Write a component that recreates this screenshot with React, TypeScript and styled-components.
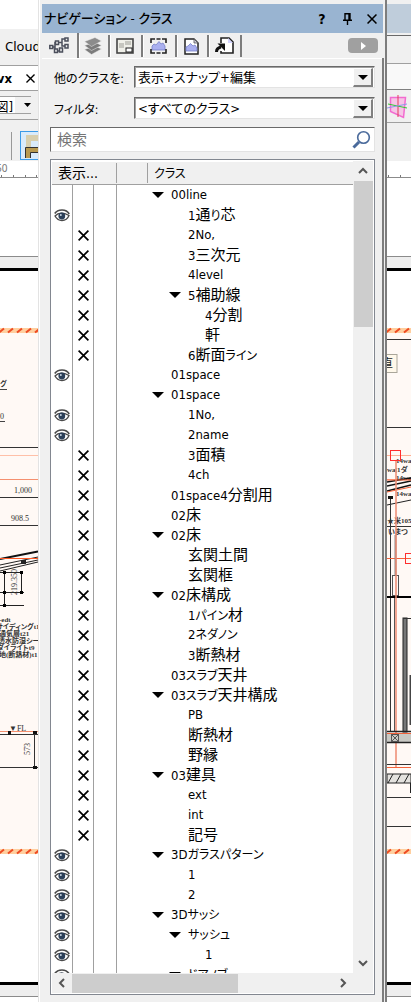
import React from 'react';
import styled, { createGlobalStyle, css } from 'styled-components';

const sans = `'DejaVu Sans Condensed', 'Noto Sans', 'Noto Sans CJK JP', sans-serif`;

const GlobalStyle = createGlobalStyle`
  *, *::before, *::after { box-sizing: border-box; }
  html, body, #root { height: 100%; }
  body {
    margin: 0;
    overflow: hidden;
    background: #fff;
    color: #000;
    font-family: ${sans};
    font-size: 13px;
  }
  button, input, select { font: inherit; color: inherit; margin: 0; padding: 0; border: 0; border-radius: 0; background: none; }
`;

const Page = styled.div`
  display: flex;
  height: 100%;
`;

/* ---------- application window behind the palette ---------- */

const Side = styled.div<{ $width: number }>`
  flex: none;
  width: ${p => p.$width}px;
  display: flex;
  flex-direction: column;
  overflow: hidden;
  background: #fff;
  svg { flex: none; display: block; }
`;

const Band = styled.div<{ $height: number; $bg?: string; $line?: string }>`
  flex: none;
  height: ${p => p.$height}px;
  display: flex;
  align-items: center;
  white-space: nowrap;
  background: ${p => p.$bg ?? '#f0f0f0'};
  border-bottom: ${p => (p.$line ? `1px solid ${p.$line}` : '0')};
`;

const MenuName = styled.span`
  padding: 0 0 3px 5px;
  font-family: 'Noto Sans', sans-serif;
  font-size: 13px;
`;

const FileTab = styled.span`
  display: flex;
  align-items: center;
  gap: 14px;
  width: 35px;
  justify-content: flex-end;
  font-weight: 700;
`;

const LayerField = styled.span`
  display: flex;
  align-items: center;
  justify-content: space-between;
  width: 31px;
  height: 18px;
  background: linear-gradient(90deg, #fff 15px, #f0f0f0 15px);
  border: solid #a0a0a0;
  border-width: 1px 0;
`;

const LayerName = styled.span`
  width: 13px;
  display: flex;
  justify-content: flex-end;
  overflow: hidden;
  font-size: 13px;
`;

/* ---------- palette ---------- */

const Palette = styled.section`
  flex: 1;
  min-width: 0;
  display: flex;
  flex-direction: column;
  padding: 4px 0 0 4px;
  background: #f0f0f0;
  border-right: 2px solid #7d7d7d;
  box-shadow: inset 1px 0 #e3e3e3, inset 2px 0 #fff;
`;

const TitleBar = styled.header`
  flex: none;
  display: flex;
  align-items: center;
  height: 29px;
  margin-right: 2px;
  padding: 0 4px 0 2px;
  background: #99b4d1;
`;

const Title = styled.h1`
  flex: 1;
  margin: 0;
  font-size: 13px;
  font-weight: 500;
  line-height: 20px;
  white-space: nowrap;
  font-feature-settings: 'palt';
`;

const TitleButton = styled.button`
  width: 14px;
  height: 20px;
  margin-left: 11px;
  display: grid;
  place-items: center;
  font-size: 14px;
  font-weight: 700;
`;

const TabBar = styled.div`
  flex: none;
  display: flex;
  height: 25px;
  align-items: flex-end;
  padding-right: 7px;
`;

const Tab = styled.button<{ $width: number; $active?: boolean }>`
  width: ${p => p.$width}px;
  height: ${p => (p.$active ? 25 : 22)}px;
  display: grid;
  place-items: center;
  padding-right: 2px;
  border-right: 2px solid #7d7d7d;
  border-left: ${p => (p.$active ? 0 : 1)}px solid #fff;
  margin-bottom: ${p => (p.$active ? 0 : 1)}px;
`;

const PlayButton = styled.button`
  width: 30px;
  height: 15px;
  margin: 0 0 5px auto;
  display: grid;
  place-items: center;
  border-radius: 4px;
  background: #a0a0a0;
`;

const TabPage = styled.div`
  flex: 1;
  min-height: 0;
  display: flex;
  flex-direction: column;
  margin-right: 1px;
  padding: 7px 7px 7px 8px;
  border-right: 2px solid #7d7d7d;
  box-shadow: inset 0 1px #fff;
`;

const Field = styled.div`
  flex: none;
  display: flex;
  align-items: center;
  height: 24px;
  margin: 0 0 7px 4px;
`;

const FieldLabel = styled.label`
  flex: none;
  width: 80px;
  font-size: 12px;
  white-space: nowrap;
  font-feature-settings: 'palt';
`;

const sunken = css`
  border: 1px solid #e3e3e3;
  border-top-color: #696969;
  border-left-color: #696969;
  background: #fff;
`;

const SelectBox = styled.span`
  ${sunken}
  position: relative;
  flex: 1;
  min-width: 0;
  height: 22px;
  box-shadow: inset 1px 1px #a0a0a0;
`;

const Select = styled.select`
  appearance: none;
  width: 100%;
  height: 20px;
  padding: 0 22px 0 3px;
  font-size: 13px;
  outline: 0;
  font-feature-settings: 'palt';
`;

const SelectArrow = styled.span`
  position: absolute;
  top: 1px;
  right: 1px;
  bottom: 0;
  width: 20px;
  display: grid;
  place-items: center;
  pointer-events: none;
  background: #f0f0f0;
  border: 1px solid #fff;
  border-right: 2px solid #808080;
  border-bottom: 2px solid #808080;
`;

const Search = styled.label`
  ${sunken}
  flex: none;
  display: flex;
  align-items: center;
  height: 25px;
  padding: 0 3px 0 6px;
  margin-bottom: 7px;
`;

const SearchInput = styled.input`
  flex: 1;
  min-width: 0;
  height: 22px;
  font-size: 15px;
  outline: 0;
  &::placeholder { color: #757575; opacity: 1; }
`;

const ListFrame = styled.div`
  flex: 1;
  min-height: 0;
  display: grid;
  grid-template-columns: minmax(0, 1fr) 20px;
  grid-template-rows: minmax(0, 1fr) 20px;
  padding: 1px;
  border: 1px solid #828790;
  background: #fff;
`;

const Viewport = styled.div`
  overflow: hidden;
  padding-top: 1px;
`;

const ClassTable = styled.table`
  width: 100%;
  table-layout: fixed;
  border-collapse: separate;
  border-spacing: 0;
`;

const HeadCell = styled.th<{ $line?: boolean }>`
  height: 23px;
  padding: 0 6px;
  text-align: left;
  font-weight: 400;
  font-size: 14px;
  line-height: 18px;
  white-space: nowrap;
  background: #f0f0f0;
  border-bottom: 1px solid #a0a0a0;
  font-feature-settings: 'palt';
  ${p => p.$line && css`background: linear-gradient(#a0a0a0, #a0a0a0) right center / 1px 20px no-repeat #f0f0f0;`}
`;

const MarkCell = styled.td`
  height: 20px;
  padding: 0;
  border-right: 1px solid #a0a0a0;
  line-height: 0;
  text-align: center;
`;

const NameCell = styled.td<{ $level: number }>`
  height: 20px;
  padding: 0 0 0 ${p => 35 + p.$level * 17}px;
`;

const NameRow = styled.span`
  display: flex;
  align-items: center;
  height: 20px;
  line-height: 20px;
  white-space: nowrap;
  font-feature-settings: 'palt';
`;

const Twisty = styled.span`
  flex: none;
  width: 19px;
  line-height: 0;
`;

const Kanji = styled.span`
  font-family: 'Noto Sans CJK JP', sans-serif;
  font-size: 15px;
  line-height: 18px;
`;

const Kana = styled.span`
  font-family: 'Noto Sans CJK JP', sans-serif;
  font-size: 12px;
  line-height: 18px;
`;

const VBar = styled.div`
  display: flex;
  flex-direction: column;
  align-items: center;
  background: #f0f0f0;
`;

const HBar = styled.div`
  display: flex;
  align-items: center;
  background: #f0f0f0;
`;

const BarButton = styled.button`
  flex: none;
  width: 20px;
  height: 20px;
  display: grid;
  place-items: center;
`;

const VThumb = styled.div`
  width: 19px;
  height: 18%;
  background: #cdcdcd;
  margin-bottom: auto;
`;

const HThumb = styled.div`
  width: 55%;
  height: 19px;
  background: #cdcdcd;
  margin-right: auto;
`;

/* ---------- small icons ---------- */

const Down = () => (
  <svg width="12" height="6" viewBox="0 0 12 6"><path d="M0 0H12L6 6Z" fill="#000" /></svg>
);

const SmallDown = () => (
  <svg width="10" height="5" viewBox="0 0 10 5"><path d="M0 0H10L5 5Z" fill="#000" /></svg>
);

const Cross = ({ size = 11 }: { size?: number }) => (
  <svg width={size} height={size} viewBox="0 0 11 11">
    <path d="M.6 .6L10.4 10.4M10.4 .6L.6 10.4" stroke="#000" strokeWidth="1.7" fill="none" />
  </svg>
);

const Eye = () => (
  <svg width="16" height="13" viewBox="0 0 16 13">
    <path d="M1 7Q6 1.500 15 6.500Q13 11.500 8 11.500Q3.500 11.500 1 7Z" fill="#fff" stroke="#4a4a4a" strokeWidth="1.300" />
    <path d="M.8 4.500Q3 1 8 1T15.200 5" fill="none" stroke="#4a4a4a" strokeWidth="1.700" />
    <circle cx="7.800" cy="7" r="3.400" fill="#2b3f58" />
    <circle cx="6.800" cy="6" r="1" fill="#c8d4e0" />
  </svg>
);

const Chevron = ({ turn }: { turn: number }) => (
  <svg width="10" height="10" viewBox="0 0 10 10">
    <path d="M1 7L5 3L9 7" transform={`rotate(${turn} 5 5)`} fill="none" stroke="#555" strokeWidth="2" />
  </svg>
);

const Pin = () => (
  <svg width="9" height="12" viewBox="0 0 9 12">
    <path d="M2 7V.700H7V7M0 7.300H9M4.500 7V12M6 1V7" fill="none" stroke="#000" strokeWidth="1.400" />
  </svg>
);

const ClassesIcon = () => (
  <svg width="20" height="17" viewBox="0 0 20 17" fill="#f0f0f0" stroke="#4b4f5c" strokeWidth="1.500">
    <path d="M3 10H6V5.500H8M6 10V14M10 5.500H13V2H17M13 5.500V9H17M9 14H12" fill="none" />
    <rect x=".8" y="8.500" width="3" height="3" />
    <rect x="6.500" y="4" width="3" height="3.500" />
    <rect x="5.500" y="12" width="3" height="3.500" />
    <rect x="10.500" y="11" width="3" height="4" />
    <rect x="16" y="1" width="3" height="3" />
    <rect x="16" y="7.500" width="3" height="3.500" />
  </svg>
);

const LayersIcon = () => (
  <svg width="18" height="18" viewBox="0 0 18 18" fill="#7c7c7c" stroke="#f0f0f0" strokeWidth=".5">
    <path d="M.5 12.500L11 9L17.500 12L7.500 17.500Z" />
    <path d="M.5 8.500L11 5L17.500 8.500L7.500 13.500Z" />
    <path d="M.5 4.500L11 .5L17.500 4L7.500 9.500Z" fill="#8c8c8c" />
  </svg>
);

const SheetIcon = () => (
  <svg width="18" height="16" viewBox="0 0 18 16">
    <rect x="1" y="1" width="16" height="14" fill="#efefe8" stroke="#454545" strokeWidth="1.600" />
    <path d="M3 5H8V10H3ZM9 3H15V7H9Z" fill="#c5c5be" />
    <rect x="10" y="10" width="6" height="4" fill="#fff" stroke="#222" />
  </svg>
);

const ViewportIcon = () => (
  <svg width="17" height="16" viewBox="0 0 17 16">
    <path d="M2 12V8L4 6L6 7L9 3.500L11 6L13 5L15 8V12Z" fill="#aab0f0" stroke="#7780c8" strokeWidth=".8" />
    <path d="M1 5V1H5M12 1H16V5M16 11V15H12M5 15H1V11M6.500 1H10.500M6.500 15H10.500" fill="none" stroke="#222" strokeWidth="1.600" />
  </svg>
);

const SavedViewIcon = () => (
  <svg width="15" height="17" viewBox="0 0 15 17">
    <path d="M1 1H10L14 5V16H1Z" fill="#fff" stroke="#222" strokeWidth="1.500" />
    <path d="M10 1V5H14Z" fill="#ccd" stroke="#555" strokeWidth=".8" />
    <path d="M2 13V9L4 8L6.500 5.500L9 8L11 7L13 10V13Z" fill="#aab0f0" stroke="#7780c8" strokeWidth=".8" />
  </svg>
);

const ReferenceIcon = () => (
  <svg width="19" height="18" viewBox="0 0 19 18">
    <path d="M6 6V1H14L18 5V16H6V14" fill="#fff" stroke="#222" strokeWidth="1.600" />
    <path d="M13 1V6H18Z" fill="#d5d5ff" />
    <path d="M1.500 15Q1.500 11 6 10" fill="none" stroke="#111" strokeWidth="3" />
    <path d="M2.500 6.500H10V14Z" fill="#111" />
  </svg>
);

const Magnifier = () => (
  <svg width="19" height="19" viewBox="0 0 19 19" fill="none" stroke="#4a6a9b">
    <circle cx="11.500" cy="7.500" r="5.800" strokeWidth="1.600" />
    <path d="M7 12L1.500 17.500" strokeWidth="3" />
  </svg>
);

/* ---------- drawing visible behind the palette ---------- */

const Sheet = ({ x, width }: { x: number; width: number }) => (
  <>
    <rect x={x} y="161" width={width} height="841" fill="#fff" />
    <path d={`M${x} 177.500h${width}M${x} 256.500h${width}`} stroke="#8b8b8b" />
    <rect x={x} y="257" width={width} height="11" fill="#eee" />
    <rect x={x} y="268" width={width} height="3" fill="#000" />
    <rect x={x} y="333" width={width} height="516" fill="#fff9f5" />
    {[328, 849].map(y => (
      <g key={y}>
        <rect x={x} y={y} width={width} height="5" fill="#ffcf9f" />
        {[0, 1, 2, 3, 4].map(i => (
          <path key={i} d={`M${x - 1 + i * 9} ${y + 4.5}l5 -4`} stroke="#ee4a22" strokeWidth="2" />
        ))}
      </g>
    ))}
    <rect x={x} y="982" width={width} height="3" fill="#000" />
    <rect x={x} y="985" width={width} height="11" fill="#eee" />
    <path d={`M${x} 996.500h${width}`} stroke="#8b8b8b" />
  </>
);

const Note = styled.text`
  font-family: 'Liberation Serif', 'Noto Sans CJK JP', serif;
  font-size: 7px;
  font-weight: 700;
  font-feature-settings: 'palt';
  fill: #333;
`;

const Dimension = styled(Note)`
  font-size: 8px;
  font-weight: 400;
`;

const LeftDrawing = () => (
  <svg width="38" height="841" viewBox="0 161 38 841">
    <Sheet x={0} width={38} />
    <text x="-4" y="172" fontSize="10" fill="#777" fontFamily="Noto Sans">50</text>
    <path d="M1.500 175v2M13.500 175v2M25.500 175v2M36.500 175v2" stroke="#777" />
    <Note x="0" y="386">グ</Note>
    <Dimension x="0" y="419">0</Dimension>
    <path d="M0 389.500H7M0 421.500H5" stroke="#444" />
    <path d="M0 447.500H38M0 497.500H38M0 525.500H38" stroke="#333" />
    <path d="M0 455.500H38" stroke="#ffc0a8" />
    <path d="M0 479.500H38M0 731.500H38" stroke="#f5906f" />
    <Dimension x="14" y="493">1,000</Dimension>
    <Dimension x="11" y="521">908.5</Dimension>
    <path d="M0 559L38 551.500" stroke="#111" strokeWidth="1.800" />
    <path d="M0 565L38 557M0 568L38 560M0 571L38 562" stroke="#222" />
    <path d="M0 558.500H38" stroke="#ff5a26" />
    <rect x="21" y="560" width="5" height="4" fill="#222" />
    <path d="M0 572.500H22M0 592.500H24M0 605.500H24M4.500 571V606M21.500 572V592" stroke="#222" />
    <path d="M3 571h3v3h-3zM3 591h3v3h-3zM20 571h3v3h-3zM20 591h3v3h-3zM3 604h3v3h-3z" fill="#000" />
    <Dimension transform="translate(17 595) rotate(-90)">219.350</Dimension>
    <Note x="-1" y="622">-edt</Note>
    <Note x="-4" y="629">サイディングt1</Note>
    <Note x="-1" y="636">通気層t21</Note>
    <Note x="-2" y="643">透水防湿シー</Note>
    <Note x="-3" y="650">ダイライトt9</Note>
    <Note x="-1" y="657">地(断熱材)t1</Note>
    <Dimension x="9" y="731">▼FL</Dimension>
    <path d="M0 734.500H38M0 767.500H38M34.500 731V768" stroke="#333" />
    <path d="M8 731h3v4h-3zM33 766h4v3h-4zM33 731h4v3h-4z" fill="#111" />
    <Dimension transform="translate(30 755) rotate(-90)">573</Dimension>
  </svg>
);

const RightDrawing = () => (
  <svg width="24" height="841" viewBox="387 161 24 841">
    <Sheet x={387} width={24} />
    <path d="M388.500 175v2M400.500 175v2" stroke="#777" />
    <path d="M387 339.500H411M387 427.500H411M387 526.500H411M387 797.500H411M387 826.500H411" stroke="#333" />
    <rect x="380" y="354.500" width="17" height="18" fill="#fff8ea" stroke="#aaa69a" />
    <text x="381" y="368" fontSize="12" fontFamily="Noto Sans CJK JP" fill="#222">直</text>
    <path d="M387 455.500H411M387 479.500H411" stroke="#ffb095" />
    <Note x="396" y="463">14wa</Note>
    <Note x="387" y="472">wa|1ダ</Note>
    <Note x="396" y="480">14wa</Note>
    <path d="M387 482L411 478M387 486L411 481M387 491L411 485" stroke="#111" strokeWidth="1.500" />
    <path d="M387 505L411 500" stroke="#222" />
    <path d="M387 492L411 487M387 480H411" stroke="#f4623a" />
    <Note x="396" y="496">14wa</Note>
    <Note x="387" y="523">★米105</Note>
    <Note x="388" y="534">いまつ</Note>
    <path d="M390.500 496V731" stroke="#333" />
    <path d="M388 496h5v3h-5z" fill="#111" />
    <path d="M387 558.500H411" stroke="#f4623a" />
    <path d="M395.500 535V575" stroke="#888" strokeWidth="2" />
    <rect x="392.500" y="575.500" width="6" height="20" fill="none" stroke="#555" />
    <rect x="387" y="596" width="24" height="2" fill="#000" />
    <path d="M396 460V767" stroke="#ee8a70" strokeWidth="1.500" />
    <path d="M394.500 598V731" stroke="#555" />
    <rect x="403" y="618" width="4" height="114" fill="#777" stroke="#222" />
    <path d="M403 618.500H411" stroke="#333" />
    <path d="M410.500 675V725" stroke="#444" strokeWidth="2" />
    <rect x="387" y="734" width="24" height="8" fill="#c9c9c4" />
    <path d="M387 731.500H411M387 742.500H411" stroke="#222" strokeWidth="1.500" />
    <path d="M387 733.500H411M387 767.500H411" stroke="#f4623a" />
    <path d="M391.500 734.500h7v7h-7zM391 734l8 8M399 734l-8 8" fill="none" stroke="#555" />
    <path d="M387 764.500H411" stroke="#333" />
    <rect x="387" y="774" width="24" height="9" fill="#e4e2de" stroke="#222" />
    <path d="M388 783L393 774M396 783L401 774M404 783L409 774M410.500 783V793" stroke="#222" />
    <rect x="390.500" y="450.500" width="10" height="10" fill="none" stroke="#ff2e2e" />
    <rect x="405.500" y="553.500" width="10" height="10" fill="none" stroke="#ff2e2e" />
  </svg>
);

const WallTool = () => (
  <svg width="38" height="45" viewBox="0 0 38 45">
    <path d="M11.500 14V42" stroke="#999" />
    <rect x="20.500" y="13.500" width="24" height="28" fill="#d9ebfb" stroke="#3b9be8" />
    <path d="M26 29V17H38V23H31V29Z" fill="#d8cfae" />
    <path d="M25.500 40V29.500H40V34.500H30.500V40" fill="#b8994f" stroke="#333" />
  </svg>
);

const PlaneTool = () => (
  <svg width="24" height="33" viewBox="0 0 24 33">
    <path d="M3.500 7.500H18.500L16.500 27.500L3.500 21.500Z" fill="#f6c5e6" stroke="#f26bd0" strokeWidth="1.500" />
    <path d="M11 5V27" stroke="#e33b5c" />
    <path d="M1 14L20 18" stroke="#32c832" />
    <path d="M0 18L20 14" stroke="#9098e8" />
  </svg>
);

/* ---------- data ---------- */

type Mark = 'eye' | 'x' | '';
type Item = { name: string; level: number; open?: boolean; mark: Mark };

const item = (mark: Mark, level: number, name: string, open = false): Item => ({ mark, level, name, open });

const classes: Item[] = [
  item('', 0, '00line', true),
  item('eye', 1, '1通り芯'),
  item('x', 1, '2No,'),
  item('x', 1, '3三次元'),
  item('x', 1, '4level'),
  item('x', 1, '5補助線', true),
  item('x', 2, '4分割'),
  item('x', 2, '軒'),
  item('x', 1, '6断面ライン'),
  item('eye', 0, '01space'),
  item('', 0, '01space', true),
  item('eye', 1, '1No,'),
  item('eye', 1, '2name'),
  item('x', 1, '3面積'),
  item('x', 1, '4ch'),
  item('x', 0, '01space4分割用'),
  item('x', 0, '02床'),
  item('x', 0, '02床', true),
  item('x', 1, '玄関土間'),
  item('x', 1, '玄関框'),
  item('x', 0, '02床構成', true),
  item('x', 1, '1パイン材'),
  item('x', 1, '2ネダノン'),
  item('x', 1, '3断熱材'),
  item('x', 0, '03スラブ天井'),
  item('x', 0, '03スラブ天井構成', true),
  item('x', 1, 'PB'),
  item('x', 1, '断熱材'),
  item('x', 1, '野縁'),
  item('x', 0, '03建具', true),
  item('x', 1, 'ext'),
  item('x', 1, 'int'),
  item('x', 1, '記号'),
  item('eye', 0, '3Dガラスパターン', true),
  item('eye', 1, '1'),
  item('eye', 1, '2'),
  item('eye', 0, '3Dサッシ', true),
  item('eye', 1, 'サッシュ', true),
  item('eye', 2, '1'),
  item('eye', 1, 'ドアノブ', true),
];

/* Kanji are set larger than kana, and both apart from the Latin face. */
const Name = ({ text }: { text: string }) => (
  <span>
    {(text.match(/[\u3040-\u30ff]+|[\u4e00-\u9fff]+|[\x20-\x7e]+/g) ?? []).map((run, i) => {
      if (/[\u3040-\u30ff]/.test(run)) return <Kana key={i}>{run}</Kana>;
      if (/[\u4e00-\u9fff]/.test(run)) return <Kanji key={i}>{run}</Kanji>;
      return run;
    })}
  </span>
);

const tabs = [
  { label: 'クラス', width: 37, icon: <ClassesIcon /> },
  { label: 'レイヤ', width: 31, icon: <LayersIcon /> },
  { label: 'シートレイヤ', width: 33, icon: <SheetIcon /> },
  { label: 'ビューポート', width: 34, icon: <ViewportIcon /> },
  { label: '登録画面', width: 32, icon: <SavedViewIcon /> },
  { label: 'ファイル参照', width: 33, icon: <ReferenceIcon /> },
];

export default function App() {
  return (
    <Page>
      <GlobalStyle />
      <Side $width={38}>
        <Band $height={29} $bg="#fff" />
        <Band $height={37} $line="#a0a0a0"><MenuName>Cloud</MenuName></Band>
        <Band $height={25} $bg="#fff" $line="#a0a0a0">
          <FileTab>vx <Cross size={9} /></FileTab>
        </Band>
        <Band $height={29} $line="#a0a0a0">
          <LayerField>
            <LayerName>図]</LayerName>
            <svg width="7" height="4" viewBox="0 0 7 4"><path d="M0 0H7L3.500 4Z" /></svg>
          </LayerField>
        </Band>
        <Band $height={41}><WallTool /></Band>
        <LeftDrawing />
      </Side>

      <Palette>
        <TitleBar>
          <Title>ナビゲーション - クラス</Title>
          <TitleButton aria-label="ヘルプ">?</TitleButton>
          <TitleButton aria-label="固定"><Pin /></TitleButton>
          <TitleButton aria-label="閉じる"><Cross size={10} /></TitleButton>
        </TitleBar>
        <TabBar role="tablist">
          {tabs.map((t, i) => (
            <Tab key={t.label} role="tab" aria-label={t.label} aria-selected={i === 0} $width={t.width} $active={i === 0}>
              {t.icon}
            </Tab>
          ))}
          <PlayButton aria-label="メニュー">
            <svg width="5" height="8" viewBox="0 0 5 8"><path d="M0 0L5 4L0 8Z" fill="#fff" /></svg>
          </PlayButton>
        </TabBar>
        <TabPage>
          <Field>
            <FieldLabel htmlFor="others">他のクラスを:</FieldLabel>
            <SelectBox>
              <Select id="others"><option>表示+スナップ+編集</option></Select>
              <SelectArrow><SmallDown /></SelectArrow>
            </SelectBox>
          </Field>
          <Field>
            <FieldLabel htmlFor="filter">フィルタ:</FieldLabel>
            <SelectBox>
              <Select id="filter"><option>&lt;すべてのクラス&gt;</option></Select>
              <SelectArrow><SmallDown /></SelectArrow>
            </SelectBox>
          </Field>
          <Search>
            <SearchInput type="text" placeholder="検索" aria-label="検索" />
            <Magnifier />
          </Search>
          <ListFrame>
            <Viewport>
              <ClassTable>
                <colgroup>
                  <col style={{ width: 21 }} />
                  <col style={{ width: 21 }} />
                  <col style={{ width: 23 }} />
                  <col style={{ width: 31 }} />
                  <col />
                </colgroup>
                <thead>
                  <tr>
                    <HeadCell colSpan={3} $line>表示...</HeadCell>
                    <HeadCell $line />
                    <HeadCell><Name text="クラス" /></HeadCell>
                  </tr>
                </thead>
                <tbody>
                  {classes.map((c, i) => (
                    <tr key={i}>
                      <MarkCell>{c.mark === 'eye' && <Eye />}</MarkCell>
                      <MarkCell>{c.mark === 'x' && <Cross />}</MarkCell>
                      <MarkCell />
                      <NameCell colSpan={2} $level={c.level}>
                        <NameRow>
                          <Twisty>{c.open && <Down />}</Twisty>
                          <Name text={c.name} />
                        </NameRow>
                      </NameCell>
                    </tr>
                  ))}
                </tbody>
              </ClassTable>
            </Viewport>
            <VBar>
              <BarButton aria-label="上へ"><Chevron turn={0} /></BarButton>
              <VThumb />
              <BarButton aria-label="下へ"><Chevron turn={180} /></BarButton>
            </VBar>
            <HBar>
              <BarButton aria-label="左へ"><Chevron turn={270} /></BarButton>
              <HThumb />
              <BarButton aria-label="右へ"><Chevron turn={90} /></BarButton>
            </HBar>
            <HBar />
          </ListFrame>
        </TabPage>
      </Palette>

      <Side $width={24}>
        <Band $height={4} />
        <Band $height={29} $bg="#bfcddb" />
        <Band $height={3} $line="#696969" />
        <Band $height={28} $line="#a0a0a0" />
        <Band $height={26} $bg="#f9f9f9" $line="#808080" />
        <Band $height={33} $line="#a0a0a0"><PlaneTool /></Band>
        <Band $height={38} />
        <RightDrawing />
      </Side>
    </Page>
  );
}
